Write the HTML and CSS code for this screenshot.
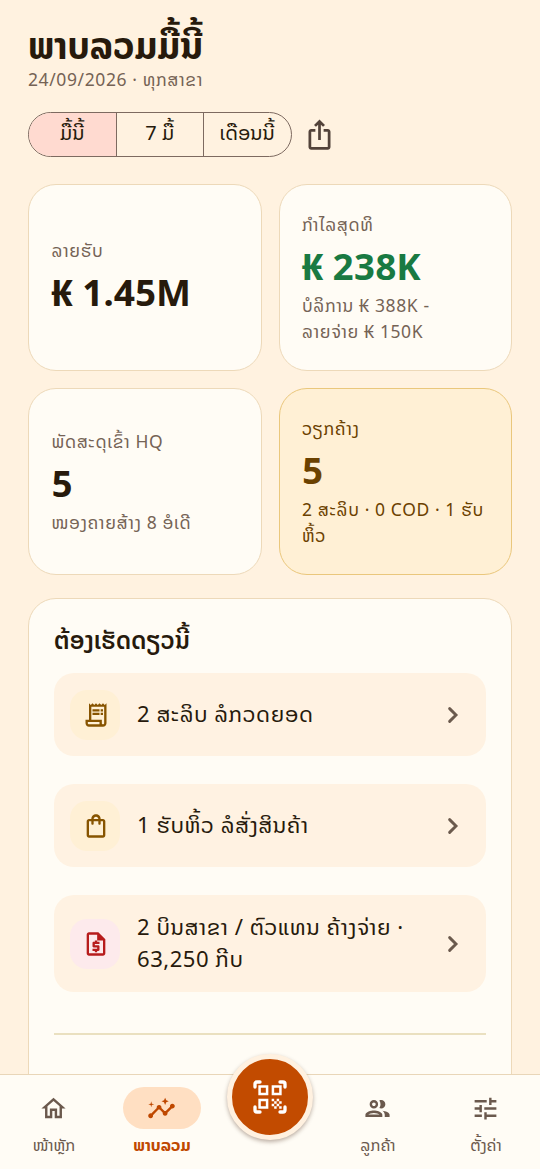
FILE: index.html
```html
<!DOCTYPE html>
<html lang="lo">
<head>
<meta charset="utf-8">
<title>ພາບລວມມື້ນີ້</title>
<link rel="stylesheet" href="styles.css">
</head>
<body>
<main class="page">
  <header>
    <h1 class="title">ພາບລວມມື້ນີ້</h1>
    <p class="subtitle">24/09/2026 · ທຸກສາຂາ</p>
  </header>
  <div class="toolbar">
    <div class="segments">
      <button class="segment selected">ມື້ນີ້</button>
      <button class="segment">7 ມື້</button>
      <button class="segment">ເດືອນນີ້</button>
    </div>
    <svg class="share" viewBox="0 0 24 24"><path d="M16 5l-1.42 1.42-1.59-1.59V16h-1.98V4.83L9.42 6.42 8 5l4-4 4 4zm4 5v11c0 1.1-.9 2-2 2H6c-1.11 0-2-.9-2-2V10c0-1.11.89-2 2-2h3v2H6v11h12V10h-3V8h3c1.1 0 2 .89 2 2z"/></svg>
  </div>
  <section class="stats">
    <article class="card">
      <p class="label">ລາຍຮັບ</p>
      <p class="value">₭ 1.45M</p>
    </article>
    <article class="card">
      <p class="label">ກຳໄລສຸດທິ</p>
      <p class="value profit">₭ 238K</p>
      <p class="note">ບໍລິການ ₭ 388K -<br>ລາຍຈ່າຍ ₭ 150K</p>
    </article>
    <article class="card">
      <p class="label">ພັດສະດຸເຂົ້າ HQ</p>
      <p class="value">5</p>
      <p class="note">ໜອງຄາຍສ້າງ 8 ອໍເດີ</p>
    </article>
    <article class="card pending">
      <p class="label">ວຽກຄ້າງ</p>
      <p class="value">5</p>
      <p class="note">2 ສະລິບ · 0 COD · 1 ຮັບ<br>ຫິ້ວ</p>
    </article>
  </section>
  <section class="todo">
    <h2 class="todo-title">ຕ້ອງເຮັດດຽວນີ້</h2>
    <div class="tile">
      <span class="badge amber"><svg viewBox="0 0 24 24"><path d="M19.5 3.5L18 2l-1.5 1.5L15 2l-1.5 1.5L12 2l-1.5 1.5L9 2 7.5 3.5 6 2v14H3v3c0 1.66 1.34 3 3 3h12c1.66 0 3-1.34 3-3V2l-1.5 1.5zM15 20H6c-.55 0-1-.45-1-1v-1h10v2zm4-1c0 .55-.45 1-1 1s-1-.45-1-1v-3H8V5h11v14zM9 7h6v2H9zM16 7h2v2h-2zM9 10h6v2H9zM16 10h2v2h-2z"/></svg></span>
      <p class="tile-text">2 ສະລິບ ລໍກວດຍອດ</p>
      <svg class="chevron" viewBox="0 0 24 24"><path d="M9.3 6.9l5.1 5.1-5.1 5.1"/></svg>
    </div>
    <div class="tile">
      <span class="badge amber"><svg viewBox="0 0 24 24"><path d="M18 6h-2c0-2.21-1.79-4-4-4S8 3.79 8 6H6c-1.1 0-2 .9-2 2v12c0 1.1.9 2 2 2h12c1.1 0 2-.9 2-2V8c0-1.1-.9-2-2-2zm-6-2c1.1 0 2 .9 2 2h-4c0-1.1.9-2 2-2zm6 16H6V8h2v2c0 .55.45 1 1 1s1-.45 1-1V8h4v2c0 .55.45 1 1 1s1-.45 1-1V8h2v12z"/></svg></span>
      <p class="tile-text">1 ຮັບຫິ້ວ ລໍສັ່ງສິນຄ້າ</p>
      <svg class="chevron" viewBox="0 0 24 24"><path d="M9.3 6.9l5.1 5.1-5.1 5.1"/></svg>
    </div>
    <div class="tile tall">
      <span class="badge red"><svg viewBox="0 0 24 24"><path d="M14 2H6c-1.1 0-1.99.9-1.99 2L4 20c0 1.1.89 2 1.99 2H18c1.1 0 2-.9 2-2V8l-6-6zM6 20V4h7v5h5v11H6zm5-1h2v-1h1c.55 0 1-.45 1-1v-3c0-.55-.45-1-1-1h-3v-1h4v-2h-2V9h-2v1h-1c-.55 0-1 .45-1 1v3c0 .55.45 1 1 1h3v1H9v2h2v1z"/></svg></span>
      <p class="tile-text">2 ບິນສາຂາ / ຕົວແທນ ຄ້າງຈ່າຍ ·<br>63,250 ກີບ</p>
      <svg class="chevron" viewBox="0 0 24 24"><path d="M9.3 6.9l5.1 5.1-5.1 5.1"/></svg>
    </div>
    <hr class="divider">
  </section>
</main>
<nav class="nav">
  <a class="nav-item"><span class="pill"><svg viewBox="0 0 24 24"><path d="M12 5.69l5 4.5V18h-2v-6H9v6H7v-7.81l5-4.5M12 3L2 12h3v8h6v-6h2v6h6v-8h3L12 3z"/></svg></span><span class="nav-label">ໜ້າຫຼັກ</span></a>
  <a class="nav-item active"><span class="pill"><svg viewBox="0 0 24 24"><path d="M21 8c-1.45 0-2.26 1.44-1.93 2.51l-3.55 3.56c-.3-.09-.74-.09-1.04 0l-2.55-2.55C12.27 10.45 11.46 9 10 9c-1.45 0-2.27 1.44-1.93 2.52l-4.56 4.55C2.44 15.74 1 16.55 1 18c0 1.1.9 2 2 2 1.45 0 2.26-1.44 1.93-2.51l4.55-4.56c.3.09.74.09 1.04 0l2.55 2.55C12.73 16.55 13.54 18 15 18c1.45 0 2.27-1.44 1.93-2.52l3.56-3.55C21.56 12.26 23 11.45 23 10c0-1.1-.9-2-2-2zM15 9l.94-2.07L18 6l-2.06-.93L15 3l-.92 2.07L12 6l2.08.93zM3.5 11L4 9l2-.5L4 8l-.5-2L3 8l-2 .5L3 9z"/></svg></span><span class="nav-label">ພາບລວມ</span></a>
  <span class="nav-item scan-slot">
    <button class="scan"><svg viewBox="0 0 24 24"><path class="corners" d="M3 6V4.2Q3 3 4.2 3H6M18 3h1.8Q21 3 21 4.2V6M21 18v1.8q0 1.2-1.2 1.2H18M6 21H4.2Q3 21 3 19.8V18"/><path d="M5 5h6v6H5zm1.5 1.5v3h3v-3zM13 5h6v6h-6zm1.5 1.5v3h3v-3zM5 13h6v6H5zm1.5 1.5v3h3v-3zM13 13h1.5v1.5H13zM14.5 14.5H16V16h-1.5zM16 13h1.5v1.5H16zM13 16h1.5v1.5H13zM14.5 17.5H16V19h-1.5zM16 16h1.5v1.5H16zM17.5 14.5H19V16h-1.5zM17.5 17.5H19V19h-1.5z" fill-rule="evenodd"/></svg></button>
  </span>
  <a class="nav-item"><span class="pill"><svg viewBox="0 0 24 24"><path d="M9 13.75c-2.34 0-7 1.17-7 3.5V19h14v-1.75c0-2.33-4.66-3.5-7-3.5zM4.34 17c.84-.58 2.87-1.25 4.66-1.25s3.82.67 4.66 1.25H4.34zM9 12c1.93 0 3.5-1.57 3.5-3.5S10.93 5 9 5 5.5 6.57 5.5 8.5 7.07 12 9 12zm0-5c.83 0 1.5.67 1.5 1.5S9.83 10 9 10s-1.5-.67-1.5-1.5S8.17 7 9 7zm7.04 6.81c1.16.84 1.96 1.96 1.96 3.44V19h4v-1.75c0-2.02-3.5-3.17-5.96-3.44zM15 12c1.93 0 3.5-1.57 3.5-3.5S16.93 5 15 5c-.54 0-1.04.13-1.5.35.63.89 1 1.98 1 3.15s-.37 2.26-1 3.15c.46.22.96.35 1.5.35z"/></svg></span><span class="nav-label">ລູກຄ້າ</span></a>
  <a class="nav-item"><span class="pill"><svg viewBox="0 0 24 24"><path d="M3 17v2h6v-2H3zM3 5v2h10V5H3zm10 16v-2h8v-2h-8v-2h-2v6h2zM7 9v2H3v2h4v2h2V9H7zm14 4v-2H11v2h10zm-6-4h2V7h4V5h-4V3h-2v6z"/></svg></span><span class="nav-label">ຕັ້ງຄ່າ</span></a>
</nav>
</body>
</html>
```
FILE: styles.css
```css
* { box-sizing: border-box; margin: 0; padding: 0; }
body {
  width: 540px; height: 1169px; overflow: hidden;
  display: flex; flex-direction: column;
  background: #fff2e0; color: #271a0c;
  font-family: "Noto Sans Lao", "Noto Sans", sans-serif; font-weight: 400;
}
svg { display: block; fill: currentColor; }
button { border: 0; background: none; font: inherit; color: inherit; }
p, h1, h2, .segment, .nav-label { white-space: nowrap; }

.page { flex: 1; min-height: 0; overflow: hidden; padding: 24px 28px 0; }
.title { font-size: 36.5px; line-height: 44px; font-weight: 700; }
.subtitle { font-size: 17.5px; line-height: 24px; letter-spacing: .6px; color: #756355; }

.toolbar { display: flex; align-items: center; gap: 11px; margin-top: 20px; }
.segments { display: flex; width: 263.5px; height: 44.5px; border: 1.5px solid #7d6a60; border-radius: 23px; overflow: hidden; }
.segment { flex: 1; font-size: 20px; line-height: 40px; padding-bottom: 2px; }
.segment + .segment { border-left: 1.5px solid #7d6a60; }
.selected { background: #ffdad0; }
.share { width: 33px; height: 33px; color: #53433a; }

.stats { display: grid; grid-template-columns: 1fr 1fr; grid-auto-rows: 187px; gap: 17px; margin-top: 27.5px; }
.card {
  display: flex; flex-direction: column; justify-content: center;
  padding: 1px 22.5px 0; background: #fffcf5;
  border: 1.3px solid #edd9b9; border-radius: 28px;
}
.label, .note { font-size: 17.5px; line-height: 26px; letter-spacing: .6px; color: #756355; }
.value { margin: 5px 0 1px; font-size: 36.5px; line-height: 49px; font-weight: 700; }
.profit { color: #197a42; }
.pending { background: #fff0d5; border-color: #eac77c; }
.pending p { color: #6b4100; }

.todo {
  height: 620px; margin-top: 23px; padding: 25px 25px 0;
  background: #fffcf5; border: 1.3px solid #edd9b9; border-radius: 28px;
}
.todo-title { font-size: 24px; line-height: 34px; font-weight: 600; letter-spacing: .2px; margin-bottom: 15px; }
.tile {
  display: flex; align-items: center; height: 83px; margin-bottom: 28px; padding: 0 18px 0 16px;
  background: #fff2e2; border-radius: 20px;
}
.tall { height: 97px; margin-bottom: 41px; }
.badge { display: grid; place-items: center; width: 50px; height: 50px; padding-left: 1px; border-radius: 17px; }
.badge svg { width: 28px; height: 28px; }
.amber { background: #fff0d5; color: #875400; }
.red { background: #fdeaec; color: #b71c1c; }
.tile-text { flex: 1; margin-left: 17px; font-size: 22.1px; line-height: 31.5px; letter-spacing: .5px; }
.chevron { width: 30px; height: 30px; fill: none; stroke: #6b5a4d; stroke-width: 2.3; stroke-linecap: round; stroke-linejoin: miter; }
.divider { border: 0; height: 1.5px; background: #eae0c0; }

.nav {
  display: flex; flex: none; height: 95px; padding-top: 12px;
  background: #fffcf5; border-top: 1.3px solid #e9d6b8;
}
.nav-item { width: 108px; display: flex; flex-direction: column; align-items: center; color: #6b594d; }
.pill { display: grid; place-items: center; width: 78px; height: 42px; padding-right: 1px; border-radius: 21px; }
.pill svg { width: 29px; height: 29px; }
.nav-label { margin-top: 4px; font-size: 16.2px; line-height: 24px; }
.active { color: #bf4800; }
.active .pill { background: #ffdfc2; }
.active .nav-label { font-weight: 700; }
.scan {
  display: grid; place-items: center; width: 86px; height: 86px; margin-top: -33px;
  background: #c24b00; border: 5.5px solid #fff1e0; border-radius: 50%; color: #fff;
  box-shadow: 0 2px 4px rgba(60, 30, 10, .35);
}
.scan svg { width: 40px; height: 40px; }
.corners { fill: none; stroke: currentColor; stroke-width: 2; stroke-linecap: round; }
```
